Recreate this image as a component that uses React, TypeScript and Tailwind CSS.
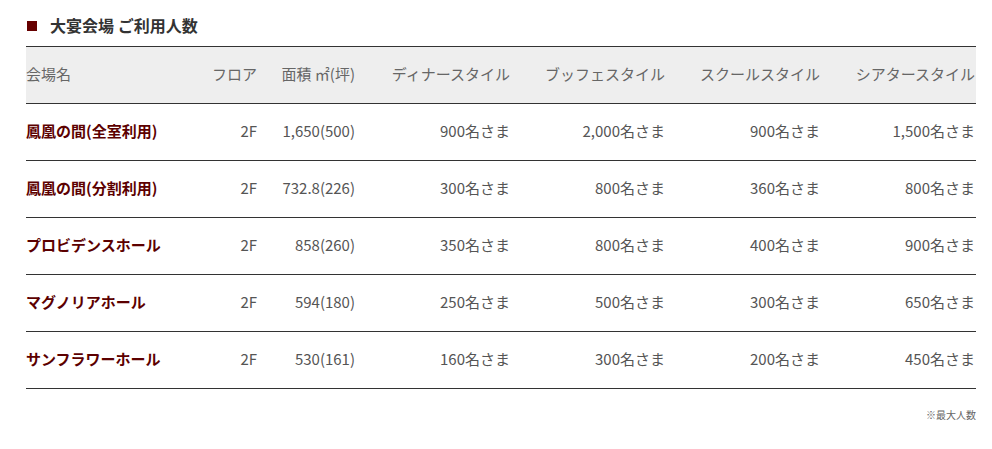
import React from 'react';

interface Row {
  name: string;
  floor: string;
  area: string;
  dinner: string;
  buffet: string;
  school: string;
  theater: string;
}

const rows: Row[] = [
  { name: '鳳凰の間(全室利用)', floor: '2F', area: '1,650(500)', dinner: '900名さま', buffet: '2,000名さま', school: '900名さま', theater: '1,500名さま' },
  { name: '鳳凰の間(分割利用)', floor: '2F', area: '732.8(226)', dinner: '300名さま', buffet: '800名さま', school: '360名さま', theater: '800名さま' },
  { name: 'プロビデンスホール', floor: '2F', area: '858(260)', dinner: '350名さま', buffet: '800名さま', school: '400名さま', theater: '900名さま' },
  { name: 'マグノリアホール', floor: '2F', area: '594(180)', dinner: '250名さま', buffet: '500名さま', school: '300名さま', theater: '650名さま' },
  { name: 'サンフラワーホール', floor: '2F', area: '530(161)', dinner: '160名さま', buffet: '300名さま', school: '200名さま', theater: '450名さま' },
];

const App: React.FC = () => {
  return (
    <div
      className="w-[992px] h-[449px] bg-white px-[26px] pt-[13px]"
      style={{ fontFamily: '"Noto Sans CJK JP", "Noto Sans", sans-serif' }}
    >
      <h2 className="flex items-center gap-[13px] text-[16px] font-bold text-[#333] leading-[24px] mb-[9px]">
        <span className="w-[10px] h-[10px] bg-[#660000] ml-[1px] mt-[1px]" />
        大宴会場 ご利用人数
      </h2>

      <table className="w-[950px] table-fixed border-collapse text-[15px] text-[#555]">
        <colgroup>
          <col className="w-[175px]" />
          <col className="w-[56px]" />
          <col className="w-[98px]" />
          <col className="w-[155px]" />
          <col className="w-[155px]" />
          <col className="w-[155px]" />
          <col className="w-[156px]" />
        </colgroup>
        <thead>
          <tr className="h-[57px] bg-[#eeeeee] border-y border-[#333] text-[#666]">
            <th className="font-normal text-left pb-[1px]">会場名</th>
            <th className="font-normal text-right pb-[1px]">フロア</th>
            <th className="font-normal text-right pb-[1px]">面積 ㎡(坪)</th>
            <th className="font-normal text-right pb-[1px]">ディナースタイル</th>
            <th className="font-normal text-right pb-[1px]">ブッフェスタイル</th>
            <th className="font-normal text-right pb-[1px]">スクールスタイル</th>
            <th className="font-normal text-right pr-[1px] pb-[1px]">シアタースタイル</th>
          </tr>
        </thead>
        <tbody>
          {rows.map((r) => (
            <tr key={r.name} className="h-[57px] border-b border-[#333]">
              <td className="text-left font-bold text-[#5c0000] pb-[2px]">{r.name}</td>
              <td className="text-right pb-[2px]">{r.floor}</td>
              <td className="text-right pb-[2px]">{r.area}</td>
              <td className="text-right pb-[2px]">{r.dinner}</td>
              <td className="text-right pb-[2px]">{r.buffet}</td>
              <td className="text-right pb-[2px]">{r.school}</td>
              <td className="text-right pr-[1px] pb-[2px]">{r.theater}</td>
            </tr>
          ))}
        </tbody>
      </table>

      <p className="w-[950px] text-right text-[10px] text-[#666] mt-[18px]">※最大人数</p>
    </div>
  );
};

export default App;
